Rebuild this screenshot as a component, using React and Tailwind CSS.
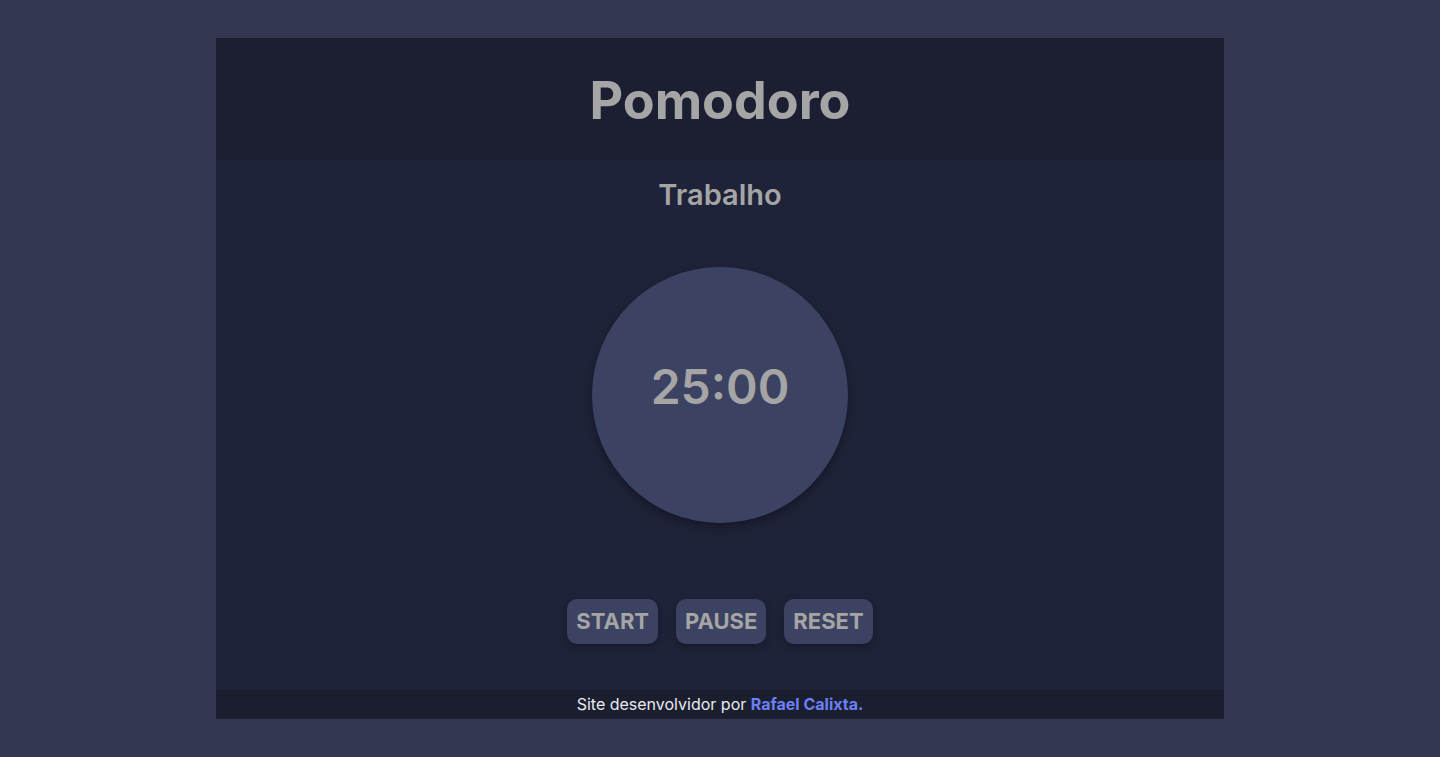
export default function App() {
  return (
    <div
      className="min-h-screen h-[757px] bg-[#343752] flex items-center justify-center"
      style={{ fontFamily: "Inter, 'Noto Sans', sans-serif" }}
    >
      <div className="w-[1008px] h-[681px] flex flex-col bg-[#1f2339]">
        {/* Header */}
        <header className="h-[122px] bg-[#1c1f31] flex items-center justify-center">
          <h1 className="text-[52px] font-bold text-[#a5a5a5] leading-none pt-1">Pomodoro</h1>
        </header>

        {/* Main */}
        <main className="flex-1 flex flex-col items-center pt-[18px]">
          <h2 className="text-[29px] font-semibold text-[#a5a5a5] leading-[34px]">Trabalho</h2>
          <div className="mt-[55px] w-[256px] h-[256px] rounded-full bg-[#3c4262] shadow-[0_4px_10px_rgba(0,0,0,0.35)] flex items-center justify-center">
            <span className="text-[48px] font-semibold text-[#a5a5a5] leading-none -mt-4">25:00</span>
          </div>
          <div className="mt-[76px] flex gap-[18px]">
            <button className="h-[45px] px-[9px] rounded-[10px] bg-[#3c4262] text-[22px] font-bold text-[#a5a5a5] shadow-[0_3px_8px_rgba(0,0,0,0.3)]">
              START
            </button>
            <button className="h-[45px] px-[9px] rounded-[10px] bg-[#3c4262] text-[22px] font-bold text-[#a5a5a5] shadow-[0_3px_8px_rgba(0,0,0,0.3)]">
              PAUSE
            </button>
            <button className="h-[45px] px-[9px] rounded-[10px] bg-[#3c4262] text-[22px] font-bold text-[#a5a5a5] shadow-[0_3px_8px_rgba(0,0,0,0.3)]">
              RESET
            </button>
          </div>
        </main>

        {/* Footer */}
        <footer className="h-[29px] bg-[#1b1e2e] flex items-center justify-center text-[16px] text-[#e8eaf2]">
          <p className="-mt-0.5">
            Site desenvolvidor por{" "}
            <a href="#" className="font-bold text-[#6b80f8]">
              Rafael Calixta.
            </a>
          </p>
        </footer>
      </div>
    </div>
  );
}
